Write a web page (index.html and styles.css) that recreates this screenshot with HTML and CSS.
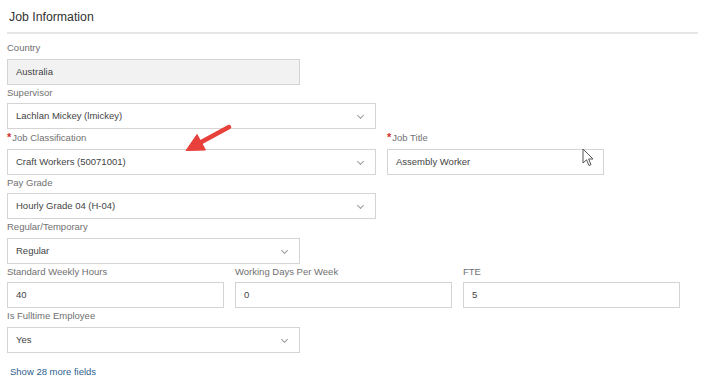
FILE: index.html
```html
<!DOCTYPE html>
<html lang="en">
<head>
  <meta charset="UTF-8">
  <meta name="viewport" content="width=device-width, initial-scale=1.0">
  <title>Job Information</title>
  <link rel="stylesheet" href="styles.css">
</head>
<body>
  <div class="panel">
    <div class="panel-head">
      <h2>Job Information</h2>
    </div>

    <div class="field">
      <label>Country</label>
      <div class="input readonly w-md">Australia</div>
    </div>

    <div class="field">
      <label>Supervisor</label>
      <div class="input select w-lg">Lachlan Mickey (lmickey)<span class="chev"></span></div>
    </div>

    <div class="row">
      <div class="field">
        <label><span class="req">*</span>Job Classification</label>
        <div class="input select w-lg">Craft Workers (50071001)<span class="chev"></span></div>
      </div>
      <div class="field">
        <label><span class="req">*</span>Job Title</label>
        <div class="input w-sm">Assembly Worker</div>
      </div>
    </div>

    <div class="field">
      <label>Pay Grade</label>
      <div class="input select w-lg">Hourly Grade 04 (H-04)<span class="chev"></span></div>
    </div>

    <div class="field">
      <label>Regular/Temporary</label>
      <div class="input select w-md">Regular<span class="chev"></span></div>
    </div>

    <div class="row">
      <div class="field">
        <label>Standard Weekly Hours</label>
        <div class="input w-sm">40</div>
      </div>
      <div class="field">
        <label>Working Days Per Week</label>
        <div class="input w-sm">0</div>
      </div>
      <div class="field">
        <label>FTE</label>
        <div class="input w-sm">5</div>
      </div>
    </div>

    <div class="field">
      <label>Is Fulltime Employee</label>
      <div class="input select w-md">Yes<span class="chev"></span></div>
    </div>

    <a href="#" class="more">Show 28 more fields</a>

    <!-- annotation arrow -->
    <svg class="pointer-arrow" width="56" height="40" viewBox="0 0 56 40">
      <line x1="48" y1="7" x2="19" y2="22.8" stroke="#e8403a" stroke-width="4.5" stroke-linecap="round"/>
      <polygon points="5,30.5 24.5,30 16,14.5" fill="#e8403a" stroke="#e8403a" stroke-width="1" stroke-linejoin="round"/>
    </svg>

    <!-- mouse cursor -->
    <svg class="cursor" width="13" height="19" viewBox="0 0 13 19">
      <path d="M1 1 L1 15 L4.5 11.8 L7 17.5 L9 16.6 L6.6 11 L11 11 Z" fill="#fff" stroke="#555" stroke-width="1" stroke-linejoin="round"/>
    </svg>
  </div>
</body>
</html>
```

FILE: styles.css
```css
body {
  margin: 0;
  padding: 0;
  background-color: #ffffff;
  font-family: "Liberation Sans", Arial, sans-serif;
  color: #333333;
}
.panel {
  position: relative;
  width: 691px;
  margin-left: 7px;
}
.panel-head {
  padding: 8px 0 6px 2px;
  border-bottom: 2px solid #e6e6e6;
}
.panel-head h2 {
  margin: 0;
  font-size: 12.3px;
  font-weight: normal;
  line-height: 18px;
  color: #333333;
}
.panel-head + .field {
  margin-top: 6px;
}
.field label {
  display: block;
  padding: 1px 0 3.5px 0;
  line-height: 14px;
  font-size: 9.5px;
  color: #707070;
}
.req {
  color: #d0302b;
  font-size: 11px;
  font-weight: bold;
  margin-right: 1px;
}
.input {
  position: relative;
  box-sizing: border-box;
  height: 26px;
  line-height: 24px;
  padding: 0 8px;
  border: 1px solid #d4d4d4;
  background-color: #ffffff;
  font-size: 9.5px;
  color: #444444;
}
.readonly {
  background-color: #f2f2f2;
}
.w-lg {
  width: 369px;
}
.w-md {
  width: 293px;
}
.w-sm {
  width: 217px;
}
.row {
  display: flex;
  gap: 11px;
}
.chev {
  position: absolute;
  right: 12px;
  top: 9px;
  width: 4px;
  height: 4px;
  border-right: 1px solid #9a9a9a;
  border-bottom: 1px solid #9a9a9a;
  transform: rotate(45deg);
}
.more {
  display: inline-block;
  margin: 12px 0 0 3px;
  line-height: 14px;
  font-size: 9.5px;
  color: #2f5f8f;
  text-decoration: none;
}
.pointer-arrow {
  position: absolute;
  left: 174px;
  top: 120px;
}
.cursor {
  position: absolute;
  left: 575px;
  top: 148px;
}
```
